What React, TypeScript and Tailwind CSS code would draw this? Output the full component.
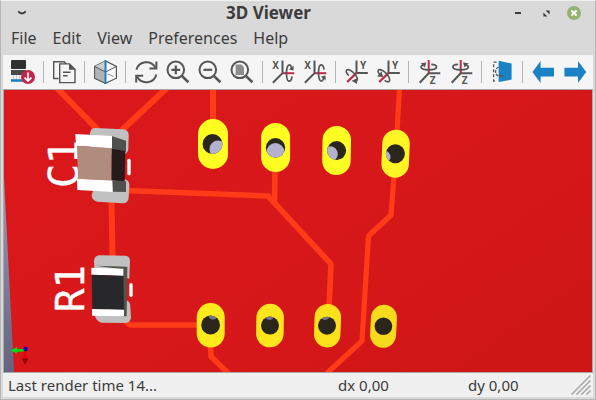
import React from "react";

const INK = "#555555";
const RED = "#c3264a";
const BLUE = "#1a81c4";

function Icon({ children }: { children: React.ReactNode }) {
  return (
    <svg viewBox="0 0 24 24" className="h-6 w-6 overflow-visible" fill="none" stroke={INK} strokeWidth="2" aria-hidden="true">
      {children}
    </svg>
  );
}

function Tool({ label, children }: { label: string; children: React.ReactNode }) {
  return (
    <button type="button" aria-label={label} className="flex h-8 w-8 shrink-0 items-center justify-center">
      <Icon>{children}</Icon>
    </button>
  );
}

function Separator() {
  return <div className="mx-1 h-[22px] w-px shrink-0 bg-[#b4b4b4]" />;
}

function AxisLetter({ x, y, children }: { x: number; y: number; children: string }) {
  return (
    <text x={x} y={y} fill={INK} stroke="none" className="font-['Noto_Sans',sans-serif] text-[10px] font-bold">
      {children}
    </text>
  );
}

function Lens() {
  return (
    <>
      <circle cx="9.8" cy="9.8" r="8.3" />
      <path d="M15.6 15.6 22.4 22.2" strokeWidth="2.6" />
    </>
  );
}

function RotateX({ flip }: { flip?: boolean }) {
  return (
    <g transform="translate(0.7 0)">
      <AxisLetter x={0.5} y={8.5}>X</AxisLetter>
      <path d="M10.8 13.2H22.5" stroke={RED} />
      <path d="M10.8 0.5V13.2L1.2 22.8" />
      <g transform={flip ? "matrix(1 0 0 -1 0 26)" : undefined}>
        <path d="M20 9C19.6 6.2 18.8 4.8 17.6 4.8C15.8 4.8 14.8 8.4 14.8 13S15.8 21.2 17.6 21.2C18.8 21.2 19.8 19.8 20.4 16.4" strokeWidth="1.7" />
        <path d="M17.2 9.6 21.8 10.4 22 5.4Z" fill={INK} stroke="none" />
      </g>
    </g>
  );
}

function RotateY({ flip }: { flip?: boolean }) {
  return (
    <g transform="translate(1 0)">
      <AxisLetter x={15} y={8.5}>Y</AxisLetter>
      <path d="M11.5 0.5V13H22.8" />
      <path d="M11.5 13 2.2 22" stroke={RED} strokeWidth="2.4" />
      {flip ? (
        <>
          <path d="M3.5 15.4C1 13 .4 10.8 1.6 10C3.4 8.8 7.4 11 10 14.2S13.4 20.6 12 21.6C11 22.2 9.2 21.6 7.6 20.4" strokeWidth="1.6" />
          <path d="M0 16.4 6 17 4.6 11.6Z" fill={INK} stroke="none" />
        </>
      ) : (
        <>
          <path d="M3.8 15.6C1.2 13 .6 10.8 1.8 10C3.6 8.8 7.4 11 10 14.2S13 20.2 11.6 21" strokeWidth="1.6" />
          <path d="M12.2 18.2 12 24 6.6 20.8Z" fill={INK} stroke="none" />
        </>
      )}
    </g>
  );
}

function RotateZ({ flip }: { flip?: boolean }) {
  return (
    <g transform="translate(0.7 0)">
      <path d="M11 13.2 2 22.8M11 13.2H22.6" />
      <path d="M11 0V13.6" stroke={RED} />
      <AxisLetter x={12} y={23.8}>Z</AxisLetter>
      <g transform={flip ? "matrix(-1 0 0 1 22 0)" : undefined}>
        <path d="M13.6 4.4C17 4.6 18.8 5.6 18.8 7C18.8 8.8 15.4 9.8 11 9.8S3.4 8.8 3.4 7C3.4 6.2 4.2 5.4 5.8 5" strokeWidth="1.8" />
        <path d="M3 3.2 8.6 2.4 7.2 7.6Z" fill={INK} stroke="none" />
      </g>
    </g>
  );
}

function Toolbar() {
  return (
    <div role="toolbar" className="flex h-[34px] items-center overflow-hidden bg-[#f5f5f5] pl-1">
      <Tool label="Reload board">
        <rect x="0" y="0" width="15" height="9" rx="1" fill="#303030" stroke="none" />
        <rect x="0" y="10" width="15" height="5" fill="#4a4a4a" stroke="none" />
        <path d="M2.5 15v4M5.5 15v4M8.5 15v4" stroke="#cfcfcf" strokeWidth="1" />
        <path d="M0 20.5H12" stroke={BLUE} strokeWidth="2.6" />
        <circle cx="17" cy="17" r="7" fill={RED} stroke="none" />
        <path d="M17 12.5V20.5M13.6 17.6 17 21 20.4 17.6" stroke="#fff" strokeWidth="1.7" />
      </Tool>
      <Separator />
      <Tool label="Copy image">
        <path d="M6.6 18.5H1.7V1.7H12.2L14.4 3.9" strokeWidth="1.4" />
        <path d="M7.7 3.9H17.4L23 9.4V22.6H7.7Z" fill="#f5f5f5" strokeWidth="1.4" />
        <path d="M17 3.6V9.8H23.4Z" fill={INK} stroke="none" />
        <path d="M11 12.2H18.6M11 15.8H15.6" strokeWidth="1.4" />
      </Tool>
      <Separator />
      <Tool label="Render current view">
        <path d="M12.5 1 1.6 6.4V18.2L12.5 23.4 23.4 18.2V6.4Z" fill="#fafafa" strokeWidth="1.2" />
        <path d="M12.5 1 1.6 6.4 12.5 12Z" fill="#cccccc" stroke="none" />
        <path d="M1.6 6.4 12.5 12V23.4L1.6 18.2Z" fill="#b0b4b6" strokeWidth="1" />
        <path d="M12.5 12 23.4 6.4" strokeWidth="1" />
        <path d="M14.5 13.8 20.5 16.6" strokeWidth="0.7" />
        <path d="M12.5 0V24" stroke={BLUE} strokeWidth="2" />
      </Tool>
      <Separator />
      <Tool label="Redraw">
        <path d="M2.4 9.6A10.4 10.4 0 0 1 21.4 7.4M22.4 14.4A10.4 10.4 0 0 1 3.2 16.8" />
        <path d="M22.4 1.6V8.4H15.4M2.2 22.6V15.8H9.2" />
      </Tool>
      <Tool label="Zoom in">
        <Lens />
        <path d="M5.4 9.8H14.2M9.8 5.4V14.2" strokeWidth="2.2" />
      </Tool>
      <Tool label="Zoom out">
        <Lens />
        <path d="M5.4 9.8H14.2" strokeWidth="2.2" />
      </Tool>
      <Tool label="Zoom to fit">
        <Lens />
        <path d="M5.6 4.6H11.4L14 7.2V15H5.6Z" fill="#8c8c8c" stroke="none" />
      </Tool>
      <Separator />
      <Tool label="Rotate X clockwise"><RotateX /></Tool>
      <Tool label="Rotate X counterclockwise"><RotateX flip /></Tool>
      <Separator />
      <Tool label="Rotate Y clockwise"><RotateY /></Tool>
      <Tool label="Rotate Y counterclockwise"><RotateY flip /></Tool>
      <Separator />
      <Tool label="Rotate Z clockwise"><RotateZ /></Tool>
      <Tool label="Rotate Z counterclockwise"><RotateZ flip /></Tool>
      <Separator />
      <Tool label="Flip board">
        <path d="M6.6 2.2H3.6V21H6.6" strokeWidth="1.3" strokeDasharray="3 2" />
        <path d="M8.6 7C4.6 8.6 4.6 14.6 8.4 16.2" strokeWidth="1.3" strokeDasharray="3 1" />
        <path d="M8.6 0.8 21.6 3.6V19.6L8.6 22Z" fill={BLUE} stroke="none" />
        <path d="M8.2 15.8C10.6 17.6 13 17 14.8 15.6L9.6 14.4Z" fill="#4c5a66" stroke="none" />
      </Tool>
      <Separator />
      <Tool label="Move left">
        <path d="M1.4 12 9.6 1V7.8H23V16.4H9.6V23Z" fill={BLUE} stroke="none" />
      </Tool>
      <Tool label="Move right">
        <path d="M23.2 12 15 1V7.8H1.4V16.4H15V23Z" fill={BLUE} stroke="none" />
      </Tool>
    </div>
  );
}

const holes = [
  { id: "h1", x: 213, y: 144, w: 30, h: 50, r: 10, tilt: 0, hx: 212.5, hy: 144, lx: 218, ly: 149, lr: 8.5, pad: "#ffff22", light: "#b2b2d0" },
  { id: "h2", x: 275.6, y: 147.5, w: 29, h: 49, r: 9.7, tilt: 0, hx: 275.5, hy: 147.8, lx: 275.4, ly: 152, lr: 9, pad: "#ffff22", light: "#b2b2d0" },
  { id: "h3", x: 336.6, y: 150.5, w: 28.5, h: 49, r: 9.5, tilt: 1, hx: 336.6, hy: 150.6, lx: 330, ly: 154, lr: 7.8, pad: "#ffff24", light: "#b2b2d0" },
  { id: "h4", x: 395.6, y: 153.7, w: 27.5, h: 48, r: 9.5, tilt: 2.5, hx: 395.4, hy: 153.7, lx: 384, ly: 157, lr: 6.5, pad: "#fff424", light: "#b2b2d0" },
  { id: "h5", x: 210.7, y: 325.3, w: 28, h: 44.5, r: 9.4, tilt: 0, hx: 210.6, hy: 325, lx: 213, ly: 315, lr: 4.5, pad: "#ffea1c", light: "#74748c" },
  { id: "h6", x: 270, y: 325.6, w: 27.5, h: 43.5, r: 9, tilt: 1, hx: 270, hy: 325.6, lx: 269.5, ly: 315, lr: 5, pad: "#ffe61c", light: "#74748c" },
  { id: "h7", x: 327.5, y: 325.7, w: 26.5, h: 43.5, r: 9, tilt: 2, hx: 327, hy: 325.7, lx: 325, ly: 315, lr: 5, pad: "#fbe01c", light: "#74748c" },
  { id: "h8", x: 383.5, y: 326.3, w: 26, h: 43, r: 8.8, tilt: 3, hx: 383.4, hy: 326.3, lx: 383, ly: 312, lr: 3, pad: "#f8da1c", light: "#74748c" },
];

function Board() {
  return (
    <svg
      viewBox="4 90 588 282"
      preserveAspectRatio="xMidYMid slice"
      role="img"
      aria-label="Board render"
      className="block h-[282px] w-full bg-[#d81719]"
    >
      <defs>
        <linearGradient id="copper" x1="0" y1="0" x2="1" y2="0.7">
          <stop offset="0" stopColor="#db181b" />
          <stop offset="0.7" stopColor="#d61719" />
          <stop offset="1" stopColor="#cf1616" />
        </linearGradient>
        <linearGradient id="sky" x1="0" y1="0" x2="0" y2="1">
          <stop offset="0" stopColor="#9a9ab8" />
          <stop offset="1" stopColor="#646480" />
        </linearGradient>
      </defs>
      <rect x="4" y="90" width="588" height="282" fill="url(#copper)" />
      <path d="M4 178 14 372H4Z" fill="url(#sky)" />

      <g fill="none" stroke="#ff3c17" strokeWidth="5.6" strokeLinejoin="bevel">
        <path d="M55 86 100 132M169 86 120 132" strokeWidth="6" />
        <path d="M111.5 200 112.5 258" strokeWidth="6" />
        <path d="M126 190.5 268 196 331 264 329 308" />
        <path d="M275 170 274.5 203" />
        <path d="M213 88V122" strokeWidth="6" />
        <path d="M399.5 88 397 132M394 176 391 215 368.5 236 362 341 326 374" strokeWidth="5.2" />
        <path d="M122 318 130 325H200" />
        <path d="M210.5 345 211 356.5 229 374" />
      </g>

      {holes.map((p) => (
        <g key={p.id}>
          <clipPath id={p.id}>
            <circle cx={p.hx} cy={p.hy} r={p.r} />
          </clipPath>
          <g transform={`rotate(${p.tilt} ${p.x} ${p.y})`}>
            <rect x={p.x - p.w / 2} y={p.y - p.h / 2} width={p.w} height={p.h} rx={p.w / 2} fill={p.pad} />
          </g>
          <circle cx={p.hx} cy={p.hy} r={p.r} fill="#2a261c" />
          <circle cx={p.lx} cy={p.ly} r={p.lr} fill={p.light} clipPath={`url(#${p.id})`} />
        </g>
      ))}

      <g className="font-['DejaVu_Sans_Mono',monospace]" fill="#ffffff" stroke="#ffffff" strokeWidth="0.4">
        <text transform="translate(78 188) rotate(-90)" className="text-[40px]">C1</text>
        <text transform="translate(84 312) rotate(-90)" className="text-[39px]">R1</text>
      </g>

      {/* Capacitor C1 */}
      <g transform="translate(0 88) scale(0.33333)">
        <path d="M286 120 368 124Q386 126 386 142L385 182Q384 198 368 198L290 190Q270 186 270 170V136Q272 120 286 120Z" fill="#c0c0c0" />
        <path d="M290 274 372 274Q388 276 388 292L386 330Q384 346 368 346L292 341Q276 338 275 322Z" fill="#c0c0c0" />
        <path d="M335 144 378 158V193L335 181Z" fill="#50504c" />
        <path d="M334 181 376 190 374 282 334 277Z" fill="#271b19" />
        <path d="M336 277 378 280V312L338 311Z" fill="#50504c" />
        <path d="M226 138 336 144V181L228 173Z" fill="#ffffff" />
        <path d="M231 173 335 181 334 278 234 273Z" fill="#b08c7e" />
        <path d="M231 272 337 278 338 312 232 306Z" fill="#ffffff" />
        <rect x="382" y="212" width="10" height="50" rx="5" fill="#ffffff" />
      </g>

      {/* Resistor R1 */}
      <g transform="translate(0 228) scale(0.33333)">
        <path d="M298 82 376 83Q390 85 390 98L388 152 284 128 282 98Q284 83 298 82Z" fill="#c0c0c0" />
        <path d="M284 262 378 216Q391 220 391 236L393 270Q390 284 376 285L304 284Q290 282 284 262Z" fill="#c0c0c0" />
        <path d="M290 113 382 116 380 265 366 265V124Z" fill="#53534a" />
        <path d="M274 119 370 122V144L274 140Z" fill="#ffffff" />
        <path d="M275 140 370 143 372 246 277 244Z" fill="#28282a" />
        <path d="M276 243 372 245V265L276 263Z" fill="#ffffff" />
        <rect x="388" y="165" width="10" height="42" rx="5" fill="#ffffff" />
      </g>

      {/* Orientation gizmo */}
      <path d="M15 350.4H25" stroke="#00e010" strokeWidth="2.6" />
      <path d="M10.5 350.4 17 347V353.6Z" fill="#00e010" />
      <path d="M25 351V359" stroke="#e80000" strokeWidth="2.8" />
      <path d="M21.8 358.4H28.4L25 365Z" fill="#960000" />
      <circle cx="25.5" cy="349" r="2.2" fill="#0000c8" />
    </svg>
  );
}

const menus = ["File", "Edit", "View", "Preferences", "Help"];

export default function App() {
  return (
    <main className="min-h-screen border border-x-[#b6b6b6] border-t-[#f0f0f0] border-b-[#b6b6b6] bg-[#d9d9d9] px-[2px] pb-[2px] font-['Noto_Sans',sans-serif] text-[15px] text-[#3c3c3c]">
      <header className="flex h-6 items-center">
        <button type="button" aria-label="Window menu" className="ml-[14px] flex h-4 w-4 items-center">
          <svg viewBox="0 0 10 6" className="h-[6px] w-[10px]" fill="none" stroke="#3c3c3c" strokeWidth="1.8">
            <path d="M1.2 1.4Q5 5.6 8.8 1.4" />
          </svg>
        </button>
        <h1 className="min-w-0 flex-1 truncate text-center text-[17px] leading-6 font-bold">3D Viewer</h1>
        <div className="flex items-center justify-end pr-3">
          <button type="button" aria-label="Minimize" className="flex h-4 w-7 items-center justify-center">
            <span className="h-[2px] w-[6px] bg-[#3c3c3c]" />
          </button>
          <button type="button" aria-label="Restore" className="flex h-4 w-7 items-center justify-center">
            <svg viewBox="0 0 7 7" className="h-[7px] w-[7px]" fill="#3c3c3c">
              <path d="M2.6 0.4H6.6V4.4ZM0.4 2.6 4.4 6.6H0.4Z" />
            </svg>
          </button>
          <button type="button" aria-label="Close" className="ml-[7px] flex h-[14px] w-[14px] items-center justify-center rounded-full bg-[#92b372]">
            <svg viewBox="0 0 6 6" className="h-[6px] w-[6px]" stroke="#fff" strokeWidth="2">
              <path d="M0.4 0.4 5.6 5.6M5.6 0.4 0.4 5.6" />
            </svg>
          </button>
        </div>
      </header>

      <nav className="mb-1 flex h-[26px] items-center gap-4 pl-2 text-base">
        {menus.map((m) => (
          <button key={m} type="button">{m}</button>
        ))}
      </nav>

      <Toolbar />

      <div className="border border-[#a8a8a8]">
        <Board />
      </div>

      <footer className="flex h-6 items-center bg-[#f0f0f0] pl-[5px]">
        <span className="min-w-0 flex-1 truncate">Last render time 14...</span>
        <span className="w-[130px]">dx 0,00</span>
        <span className="w-[103px]">dy 0,00</span>
        <svg viewBox="0 0 20 20" className="mr-[2px] h-5 w-5" stroke="#a6a6a6" strokeWidth="1.5" aria-hidden="true">
          <path d="M0.5 19.5 19.5 0.5M5.5 19.5 19.5 5.5M10.5 19.5 19.5 10.5M15.5 19.5 19.5 15.5" />
        </svg>
      </footer>
    </main>
  );
}
